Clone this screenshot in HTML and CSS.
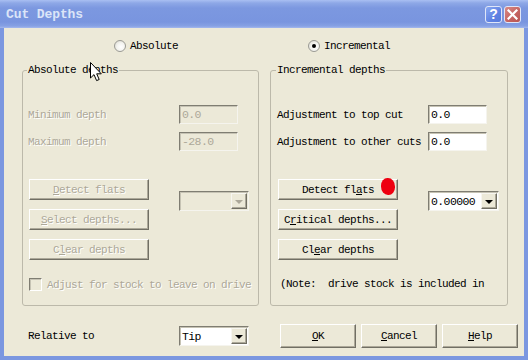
FILE: index.html
```html
<!DOCTYPE html>
<html>
<head>
<meta charset="utf-8">
<link rel="stylesheet" href="styles.css">
</head>
<body>
<div class="window">
  <div class="titlebar">
    <span class="title">Cut Depths</span>
    <div class="caption-buttons">
      <span class="cap help">?</span>
      <span class="cap close"><svg width="11" height="11" viewBox="0 0 11 11"><path d="M1.5 1.5 L9.5 9.5 M9.5 1.5 L1.5 9.5" stroke="#fff" stroke-width="2.2" stroke-linecap="square"/></svg></span>
    </div>
  </div>
  <div class="client">
    <div class="radios">
      <div class="radio first"><span class="radio-dot"></span><span>Absolute</span></div>
      <div class="radio"><span class="radio-dot checked"></span><span>Incremental</span></div>
    </div>
    <div class="groups">
      <fieldset class="group group-left">
        <legend>Absolute depths</legend>
        <div class="group-body">
          <div class="field-row"><span class="lbl disabled">Minimum depth</span><span class="edit edit-disabled">0.0</span></div>
          <div class="field-row"><span class="lbl disabled">Maximum depth</span><span class="edit edit-disabled">-28.0</span></div>
          <div class="btn-block">
            <div class="btn-col">
              <span class="btn btn-group btn-disabled"><u>D</u>etect flats</span>
              <span class="btn btn-group btn-disabled"><u>S</u>elect depths...</span>
              <span class="btn btn-group btn-disabled">C<u>l</u>ear depths</span>
            </div>
            <span class="combo combo-disabled combo-side"><span class="combo-text"></span><span class="drop"><span class="arrow"></span></span></span>
          </div>
          <div class="check-row"><span class="checkbox"></span><span class="disabled">Adjust for stock to leave on drive</span></div>
        </div>
      </fieldset>
      <fieldset class="group group-right">
        <legend>Incremental depths</legend>
        <div class="group-body">
          <div class="field-row"><span class="lbl">Adjustment to top cut</span><span class="edit">0.0</span></div>
          <div class="field-row"><span class="lbl">Adjustment to other cuts</span><span class="edit">0.0</span></div>
          <div class="btn-block">
            <div class="btn-col">
              <span class="btn btn-group">Detect fl<u>a</u>ts</span>
              <span class="btn btn-group">C<u>r</u>itical depths...</span>
              <span class="btn btn-group">Cl<u>e</u>ar depths</span>
            </div>
            <span class="combo combo-side"><span class="combo-text">0.00000</span><span class="drop"><span class="arrow"></span></span></span>
          </div>
          <div class="note">(Note:  drive stock is included in</div>
        </div>
      </fieldset>
    </div>
    <div class="bottom">
      <span class="bottom-lbl">Relative to</span>
      <span class="combo combo-tip"><span class="combo-text">Tip</span><span class="drop"><span class="arrow"></span></span></span>
      <div class="dlg-buttons">
        <span class="btn btn-dlg"><u>O</u>K</span>
        <span class="btn btn-dlg"><u>C</u>ancel</span>
        <span class="btn btn-dlg"><u>H</u>elp</span>
      </div>
    </div>
  </div>
  <span class="blob"></span>
  <svg class="cursor" width="13" height="20" viewBox="0 0 13 20"><path d="M0.5 0.5 L0.5 16 L4 12.6 L6.6 18.6 L9.2 17.5 L6.7 11.8 L11.3 11.8 Z" fill="#fff" stroke="#000" stroke-width="1" stroke-linejoin="miter"/></svg>
</div>
</body>
</html>
```

FILE: styles.css
```css
* { box-sizing: border-box; }
html, body { margin: 0; padding: 0; background: #ece9d8; }
body {
  font-family: "Liberation Mono", "DejaVu Sans Mono", monospace;
  font-size: 11px;
  letter-spacing: -0.6px;
  color: #000;
}
.window {
  position: relative;
  width: 528px;
  height: 360px;
  display: flex;
  flex-direction: column;
  background: #ece9d8;
  overflow: hidden;
}
.titlebar {
  height: 28px;
  flex: none;
  display: flex;
  align-items: center;
  justify-content: space-between;
  padding: 0 7px 0 6px;
  background: linear-gradient(#a9bff2 0px, #8ea8e7 3px, #7c98e0 8px, #7995df 22px, #86a1e4 26px, #a3b8ee 28px);
}
.title {
  font-weight: bold;
  font-size: 13px;
  letter-spacing: -0.1px;
  color: #dbe5f8;
  padding-top: 1px;
}
.caption-buttons { display: flex; gap: 2px; }
.cap {
  width: 17px;
  height: 17px;
  border-radius: 3px;
  border: 1px solid #dfe6f8;
  display: flex;
  align-items: center;
  justify-content: center;
  color: #fff;
  font-family: "Liberation Sans", Arial, sans-serif;
  font-weight: bold;
  font-size: 14px;
  letter-spacing: 0;
}
.help { background: linear-gradient(135deg, #8aa9f2, #5f82e2 60%, #577bdc); }
.close { background: linear-gradient(135deg, #d88a86, #c4625f 60%, #b95653); }
.client {
  flex: 1;
  display: flex;
  flex-direction: column;
  border-left: 4px solid #7b97e0;
  border-right: 4px solid #7b97e0;
  border-bottom: 4px solid #7b97e0;
}
.radios {
  height: 36px;
  display: flex;
  align-items: center;
  padding-left: 110px;
}
.radio { display: flex; align-items: center; gap: 4px; }
.radio.first { width: 194px; }
.radio-dot {
  width: 12px;
  height: 12px;
  border-radius: 50%;
  border: 1px solid #9a9a94;
  background: radial-gradient(circle at 60% 60%, #ffffff 0, #f4f4f0 45%, #d8d6cc 100%);
  display: flex;
  align-items: center;
  justify-content: center;
}
.radio-dot.checked::after {
  content: "";
  width: 4px;
  height: 4px;
  border-radius: 50%;
  background: #000;
}
.groups {
  display: flex;
  gap: 11px;
  padding-left: 18px;
}
.group {
  margin: 0;
  padding: 0;
  min-width: 0;
  width: 237px;
  height: 242px;
  border: 1px solid #bcb9aa;
  border-radius: 3px;
}
.group-right { width: 238px; }
.group legend {
  padding: 0 1px;
  margin-left: 4px;
  line-height: 12px;
}
.group-right legend { margin-left: 5px; }
.group-body { padding: 29px 0 0 5px; }
.group-right .group-body { padding-left: 6px; }
.field-row {
  display: flex;
  align-items: center;
  height: 19px;
  margin-bottom: 8px;
}
.lbl { width: 151px; }
.disabled { color: #aca899; text-shadow: 1px 1px 0 #fff; }
.edit {
  width: 59px;
  height: 19px;
  background: #fff;
  border: 1px solid;
  border-color: #7f7d72 #f5f4ee #f5f4ee #7f7d72;
  box-shadow: inset 1px 1px 0 #c6c3b4;
  padding: 1px 0 0 2px;
  line-height: 15px;
  font-size: 11.5px;
}
.edit-disabled {
  background: #ece9d8;
  color: #aca899;
}
.btn-block {
  display: flex;
  margin-top: 28px;
}
.btn-col {
  display: flex;
  flex-direction: column;
  gap: 9px;
  margin-left: 1px;
}
.btn {
  display: flex;
  align-items: center;
  justify-content: center;
  background: #ece9d8;
  border: 1px solid;
  border-color: #ffffff #716f64 #716f64 #ffffff;
  box-shadow: inset -1px -1px 0 #aca899;
  white-space: pre;
}
.btn-group { width: 120px; height: 21px; }
.btn-disabled { color: #aca899; text-shadow: 1px 1px 0 #fff; }
.combo {
  display: flex;
  align-items: center;
  width: 70px;
  height: 20px;
  background: #fff;
  border: 1px solid;
  border-color: #7f7d72 #f5f4ee #f5f4ee #7f7d72;
  box-shadow: inset 1px 1px 0 #c6c3b4;
  padding: 1px 1px 1px 2px;
}
.combo-side { margin: 12px 0 0 30px; }
.group-right .combo-side { width: 71px; }
.combo-disabled { background: #ece9d8; }
.combo-text { flex: 1; font-size: 11.5px; }
.drop {
  width: 16px;
  height: 16px;
  display: flex;
  align-items: center;
  justify-content: center;
  background: #ece9d8;
  border: 1px solid;
  border-color: #f7f6f0 #716f64 #716f64 #f7f6f0;
  box-shadow: inset -1px -1px 0 #aca899;
}
.arrow {
  width: 0;
  height: 0;
  border-left: 4px solid transparent;
  border-right: 4px solid transparent;
  border-top: 4px solid #000;
  margin-top: 1px;
}
.combo-disabled .arrow { border-top-color: #aca899; }
.check-row {
  display: flex;
  align-items: center;
  gap: 5px;
  margin-top: 18px;
  margin-left: 1px;
  height: 13px;
}
.checkbox {
  width: 13px;
  height: 13px;
  border: 1px solid;
  border-color: #7f7d72 #fff #fff #7f7d72;
  box-shadow: inset 1px 1px 0 #c6c3b4;
  background: #ece9d8;
}
.note {
  margin-top: 18px;
  margin-left: 3px;
  height: 13px;
  line-height: 13px;
  white-space: pre;
}
.bottom {
  display: flex;
  align-items: center;
  height: 24px;
  margin-top: 18px;
  padding-left: 24px;
}
.bottom-lbl { width: 151px; }
.combo-tip { width: 70px; }
.dlg-buttons {
  display: flex;
  gap: 5px;
  margin-left: 31px;
}
.btn-dlg { width: 76px; height: 24px; }
.blob {
  position: absolute;
  left: 381px;
  top: 178px;
  width: 14px;
  height: 17px;
  border-radius: 45% 50% 45% 50%;
  background: #ee0010;
}
.cursor {
  position: absolute;
  left: 90px;
  top: 62px;
}
```
